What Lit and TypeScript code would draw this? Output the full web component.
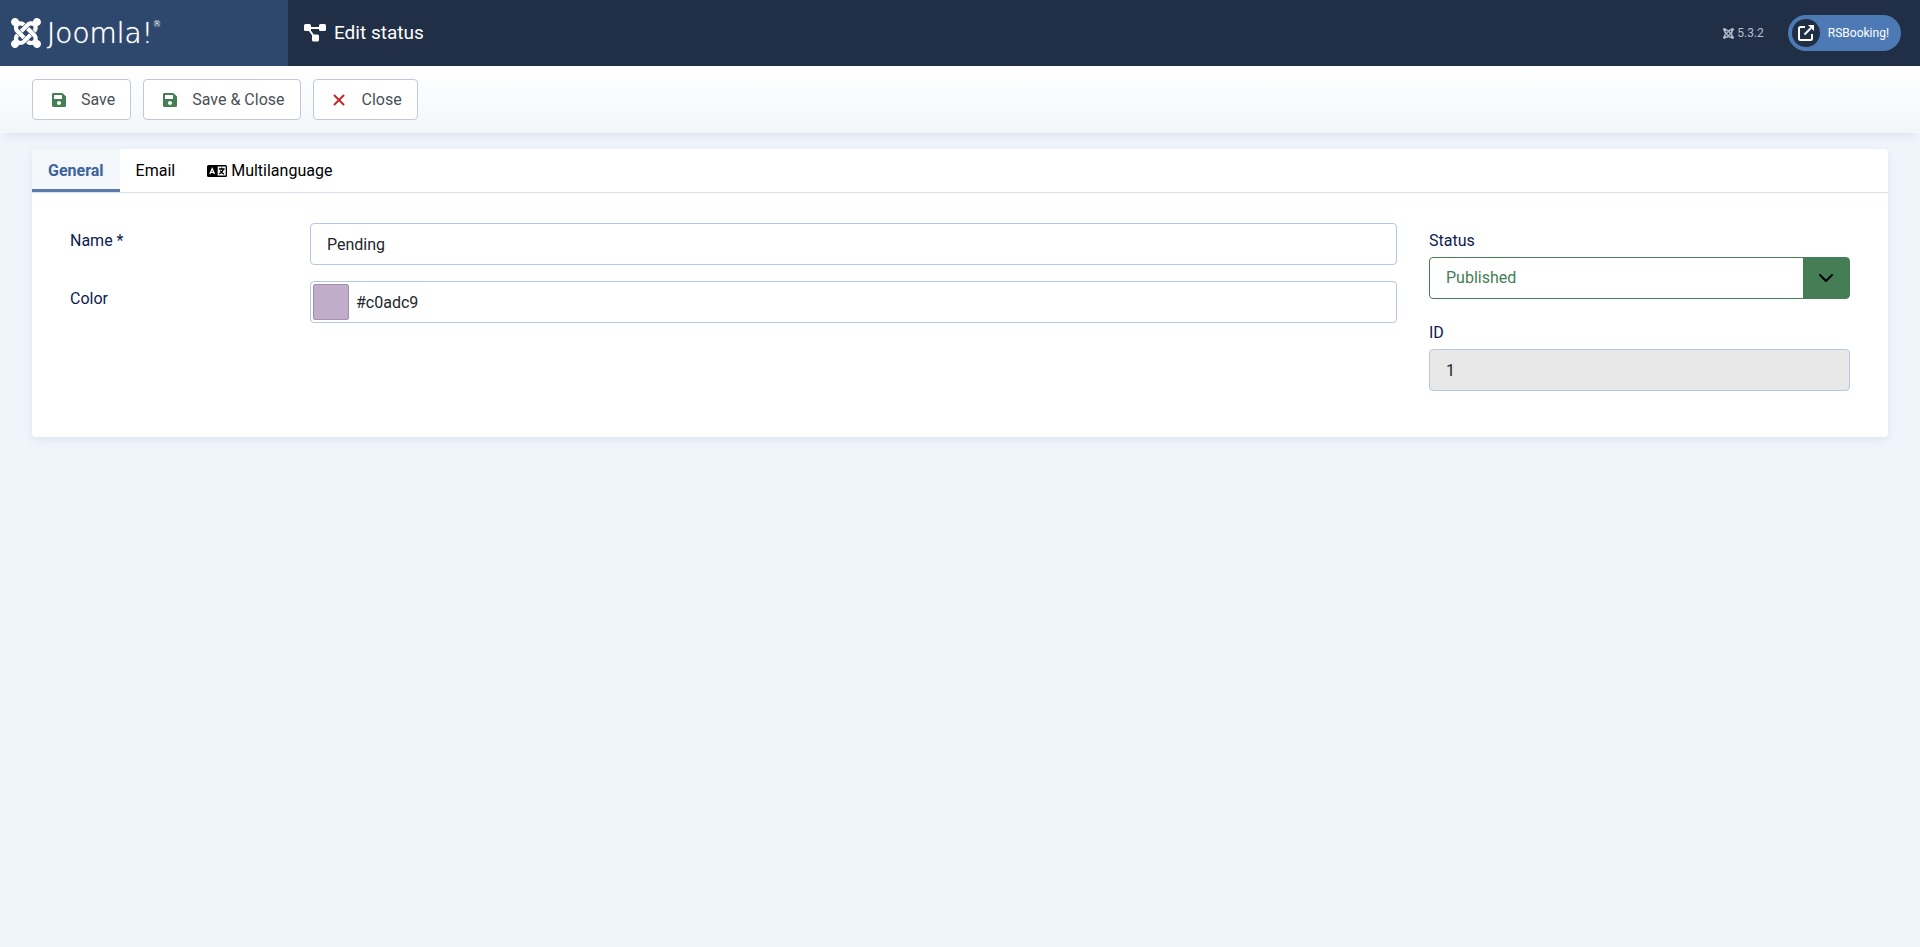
import { LitElement, html, css, svg } from "lit";
import { customElement, state } from "lit/decorators.js";

const joomlaMark = svg`<path d="M.6 92.1C.6 58.8 27.4 32 60.4 32c30 0 54.5 21.9 59.2 50.2 32.6-7.6 67.1.6 96.5 30l-44.3 44.3c-20.5-20.5-42.6-16.3-55.4-3.5-14.3 14.3-14.3 37.9 0 52.2l99.5 99.5-44 44.3c-87.7-87.2-49.7-49.7-99.8-99.7-26.8-26.5-35-64.8-24.8-98.9C20.4 144.6.6 120.7.6 92.1zm129.5 116.4l44.3 44.3c10-10 89.7-89.7 99.7-99.8 14.3-14.3 37.6-14.3 51.9 0 12.8 12.8 17 35-3.5 55.4l44 44.3c31.2-31.2 38.5-67.6 28.9-101.2 29.2-4.1 51.9-29.2 51.9-59.5 0-33.2-26.8-60.1-59.8-60.1-30.3 0-55.4 22.5-59.5 51.6-33.8-9.9-71.7-1.5-98.3 25.1-18.3 19.1-71.1 71.5-99.6 99.9zm266.3 152.2c8.2-32.7-.9-68.5-26.3-93.9-11.8-12.2 5 4.7-99.5-99.7l-44.3 44.3 99.7 99.7c14.3 14.3 14.3 37.6 0 51.9-12.8 12.8-35 17-55.4-3.5l-44 44.3c27.6 30.2 68 38.8 102.7 28 5.5 27.4 29.7 48.1 58.9 48.1 33 0 59.8-26.8 59.8-60.1 0-30.2-22.5-55-51.6-59.1zm-84.3-53.1l-44-44.3c-87 86.4-50.4 50.4-99.7 99.8-14.3 14.3-37.6 14.3-51.9 0-13.1-13.4-16.9-35.3 3.2-55.4l-44-44.3c-30.2 30.2-38 65.2-29.5 98.3-26.7 6-46.2 29.9-46.2 58.2C0 453.2 26.8 480 59.8 480c28.6 0 52.5-19.8 58.6-46.7 32.7 8.2 68.5-.6 94.2-26.7 32.1-32 12.2-12.4 99.5-99z"/>`;

const saveIcon = html`<svg class="save-icon" viewBox="0 32 448 448" aria-hidden="true"><path fill="currentColor" d="M433.941 129.941l-83.882-83.882A48 48 0 0 0 316.118 32H48C21.49 32 0 53.49 0 80v352c0 26.51 21.49 48 48 48h352c26.51 0 48-21.49 48-48V163.882a48 48 0 0 0-14.059-33.941zM224 416c-35.346 0-64-28.654-64-64 0-35.346 28.654-64 64-64s64 28.654 64 64c0 35.346-28.654 64-64 64zm96-304.52V212c0 6.627-5.373 12-12 12H76c-6.627 0-12-5.373-12-12V108c0-6.627 5.373-12 12-12h228.52c3.183 0 6.235 1.264 8.485 3.515l3.48 3.48A11.996 11.996 0 0 1 320 111.48z"/></svg>`;

const closeIcon = html`<svg class="close-icon" viewBox="0 0 12 12" aria-hidden="true"><path d="M1.500 1.500l9 9M10.500 1.500l-9 9" stroke="currentColor" stroke-width="2" stroke-linecap="round"/></svg>`;

const languageIcon = html`<svg class="language-icon" viewBox="0 0 20 12" aria-hidden="true">
  <path fill="currentColor" fill-rule="evenodd" d="M1.5 0h17A1.5 1.5 0 0 1 20 1.500v9a1.500 1.500 0 0 1-1.500 1.500h-17A1.500 1.500 0 0 1 0 10.500v-9A1.500 1.500 0 0 1 1.500 0zM10.700 1.500v9h8v-9z"/>
  <path d="M2.900 9l2.300-5.400L7.500 9M3.700 7.400h3" fill="none" stroke="#fff" stroke-width="1.300"/>
  <path d="M11.800 4h5.800M14.700 2.500V4M16.300 4.200c-.5 2.300-2.300 4-4.300 4.800M13.100 5.600c.9 1.700 2.300 2.900 4 3.500" fill="none" stroke="currentColor" stroke-width="1.300"/>
</svg>`;

@customElement("app-root")
export class AppRoot extends LitElement {
  @state() private tab = "general";

  static styles = css`
    :host {
      display: block;
      min-height: 100vh;
      background: #f0f4fb;
      color: #22262a;
      font: 400 16px/24px Roboto, sans-serif;
    }
    *, *::before { box-sizing: border-box; }
    a { color: inherit; text-decoration: none; }
    button, input, select { font: inherit; color: inherit; margin: 0; }
    svg { display: block; flex: none; }

    .header { display: flex; height: 66px; background: #202f45; color: #fff; }
    .brand {
      display: flex;
      align-items: center;
      gap: 6px;
      width: 288px;
      padding-left: 11px;
      background: #2d486c;
    }
    .brand-mark { width: 30px; height: 30px; }
    .brand-name {
      display: flex;
      align-items: flex-start;
      padding-top: 2px;
      font: 200 28px/34px "DejaVu Sans", sans-serif;
      text-shadow: 0 0 1px #fff;
    }
    .brand-reg { font-size: 8px; line-height: 16px; }
    .title { display: flex; align-items: center; gap: 8px; flex: 1; padding-left: 16px; margin: 0; font-size: 19px; font-weight: 400; }
    .title-icon { width: 22px; height: 18px; }
    .header-items { display: flex; align-items: center; gap: 24px; padding-right: 19px; font-size: 12px; }
    .version { display: flex; align-items: center; gap: 3px; color: #b4bfcd; }
    .version-icon { width: 11px; height: 11px; }
    .site-link {
      display: flex;
      align-items: center;
      gap: 8px;
      height: 36px;
      padding: 0 12px 0 4px;
      border-radius: 18px;
      background: #4d7ab5;
    }
    .site-icon { display: grid; place-items: center; width: 28px; height: 28px; border-radius: 50%; background: #202f45; }
    .site-icon svg { width: 16px; height: 16px; }

    .toolbar {
      display: flex;
      gap: 12px;
      padding: 13px 32px;
      background: linear-gradient(#fff, #f3f6f9);
      box-shadow: 0 6px 10px -6px #cdd6e8;
    }
    .action {
      display: flex;
      align-items: center;
      height: 41px;
      padding: 0 15px 0 19px;
      border: 1px solid #c0c8dc;
      border-radius: 4px;
      background: #fff;
      color: #495057;
    }
    .save-icon { width: 14px; height: 14px; margin-right: 15px; color: #457d54; }
    .close-icon { width: 12px; height: 12px; margin-right: 17px; color: #c52827; }

    .card {
      margin: 16px 32px;
      border-radius: 4px;
      background: #fff;
      box-shadow: 0 3px 8px #dfe6f3;
    }
    .tabs { display: flex; border-bottom: 1px solid #d9e2f1; }
    .tab {
      display: flex;
      align-items: center;
      gap: 4px;
      height: 43px;
      padding: 3px 16px 0;
      border: 0;
      border-bottom: 3px solid transparent;
      background: none;
      color: #000;
    }
    .tab.active { border-color: #5c7aa8; border-top-left-radius: 4px; background: #f3f7fa; color: #3d639b; font-weight: 700; }
    .language-icon { width: 20px; height: 12px; }

    .panel { display: grid; grid-template-columns: repeat(4, 1fr); gap: 32px; padding: 30px 38px 46px; }
    .fields { grid-column: span 3; display: flex; flex-direction: column; gap: 16px; }
    .field { display: grid; grid-template-columns: 240px 1fr; }
    .label { padding-top: 6px; color: #0c2050; }
    .input {
      width: 100%;
      height: 42px;
      padding: 0 16px;
      border: 1px solid #b6c7e2;
      border-radius: 4px;
      background: #fff;
    }
    .color-box { display: flex; align-items: center; gap: 7px; padding: 0 2px; }
    .swatch { width: 36px; height: 36px; padding: 0; border: 1px solid #a390b0; border-radius: 2px; background: #c0adc9; }
    .color-text { flex: 1; min-width: 0; height: 36px; padding: 0; border: 0; outline: 0; background: none; }

    .side { display: flex; flex-direction: column; gap: 16px; }
    .side-field { display: flex; flex-direction: column; gap: 4px; }
    .select-box { display: grid; }
    .select, .chevron { grid-area: 1 / 1; }
    .select {
      appearance: none;
      padding: 0 64px 0 16px;
      border-color: #457d54;
      background: linear-gradient(#457d54, #457d54) right / 46px 100% no-repeat #fff;
      color: #457d54;
    }
    .chevron { justify-self: end; align-self: center; width: 16px; height: 16px; margin-right: 16px; pointer-events: none; color: #000; }
    .readonly { background: #e8e8e8; }
  `;

  private renderTab(id: string, label: unknown) {
    return html`<button type="button" role="tab" class="tab ${this.tab === id ? "active" : ""}"
      aria-selected=${this.tab === id} @click=${() => (this.tab = id)}>${label}</button>`;
  }

  render() {
    return html`
      <header class="header">
        <a class="brand" href="#">
          <svg class="brand-mark" viewBox="0 32 448 448" fill="currentColor" aria-hidden="true">${joomlaMark}</svg>
          <span class="brand-name">Joomla!<span class="brand-reg">®</span></span>
        </a>
        <h1 class="title">
          <svg class="title-icon" viewBox="0 0 22 18" aria-hidden="true">
            <path d="M4 4h14M4 4l7 10" stroke="currentColor" stroke-width="2"/>
            <g fill="currentColor"><rect width="7" height="7" rx="1.500"/><rect x="15" width="7" height="7" rx="1.500"/><rect x="8" y="10.500" width="7" height="7" rx="1.500"/></g>
          </svg>
          Edit status
        </h1>
        <div class="header-items">
          <span class="version">
            <svg class="version-icon" viewBox="0 32 448 448" fill="currentColor" aria-hidden="true">${joomlaMark}</svg>5.3.2
          </span>
          <a class="site-link" href="#">
            <span class="site-icon">
              <svg viewBox="0 0 16 16" fill="none" stroke="currentColor" stroke-width="2" aria-hidden="true">
                <path d="M7 2H2.500Q1 2 1 3.500v10Q1 15 2.500 15h10q1.500 0 1.500-1.500V9"/>
                <path d="M6.500 9.500L13 3"/><path d="M10 0h6v6z" fill="currentColor" stroke="none"/>
              </svg>
            </span>
            RSBooking!
          </a>
        </div>
      </header>

      <nav class="toolbar" aria-label="Toolbar">
        <button type="button" class="action">${saveIcon}<span class="action-label">Save</span></button>
        <button type="button" class="action">${saveIcon}<span class="action-label">Save &amp; Close</span></button>
        <button type="button" class="action">${closeIcon}<span class="action-label">Close</span></button>
      </nav>

      <main class="card">
        <div class="tabs" role="tablist">
          ${this.renderTab("general", "General")}
          ${this.renderTab("email", "Email")}
          ${this.renderTab("multilanguage", html`${languageIcon}Multilanguage`)}
        </div>
        <form class="panel">
          <div class="fields">
            <div class="field">
              <label class="label" for="name">Name *</label>
              <input class="input" id="name" type="text" value="Pending" required>
            </div>
            <div class="field">
              <label class="label" for="color">Color</label>
              <div class="input color-box">
                <button class="swatch" type="button" aria-label="Pick a color"></button>
                <input class="color-text" id="color" type="text" value="#c0adc9">
              </div>
            </div>
          </div>
          <div class="side">
            <div class="side-field">
              <label class="label" for="status">Status</label>
              <div class="select-box">
                <select class="input select" id="status">
                  <option selected>Published</option>
                  <option>Unpublished</option>
                </select>
                <svg class="chevron" viewBox="0 0 16 16" aria-hidden="true"><path d="M2 5l6 6 6-6" fill="none" stroke="currentColor" stroke-width="2" stroke-linecap="round" stroke-linejoin="round"/></svg>
              </div>
            </div>
            <div class="side-field">
              <label class="label" for="record-id">ID</label>
              <input class="input readonly" id="record-id" type="text" value="1" readonly>
            </div>
          </div>
        </form>
      </main>
    `;
  }
}
